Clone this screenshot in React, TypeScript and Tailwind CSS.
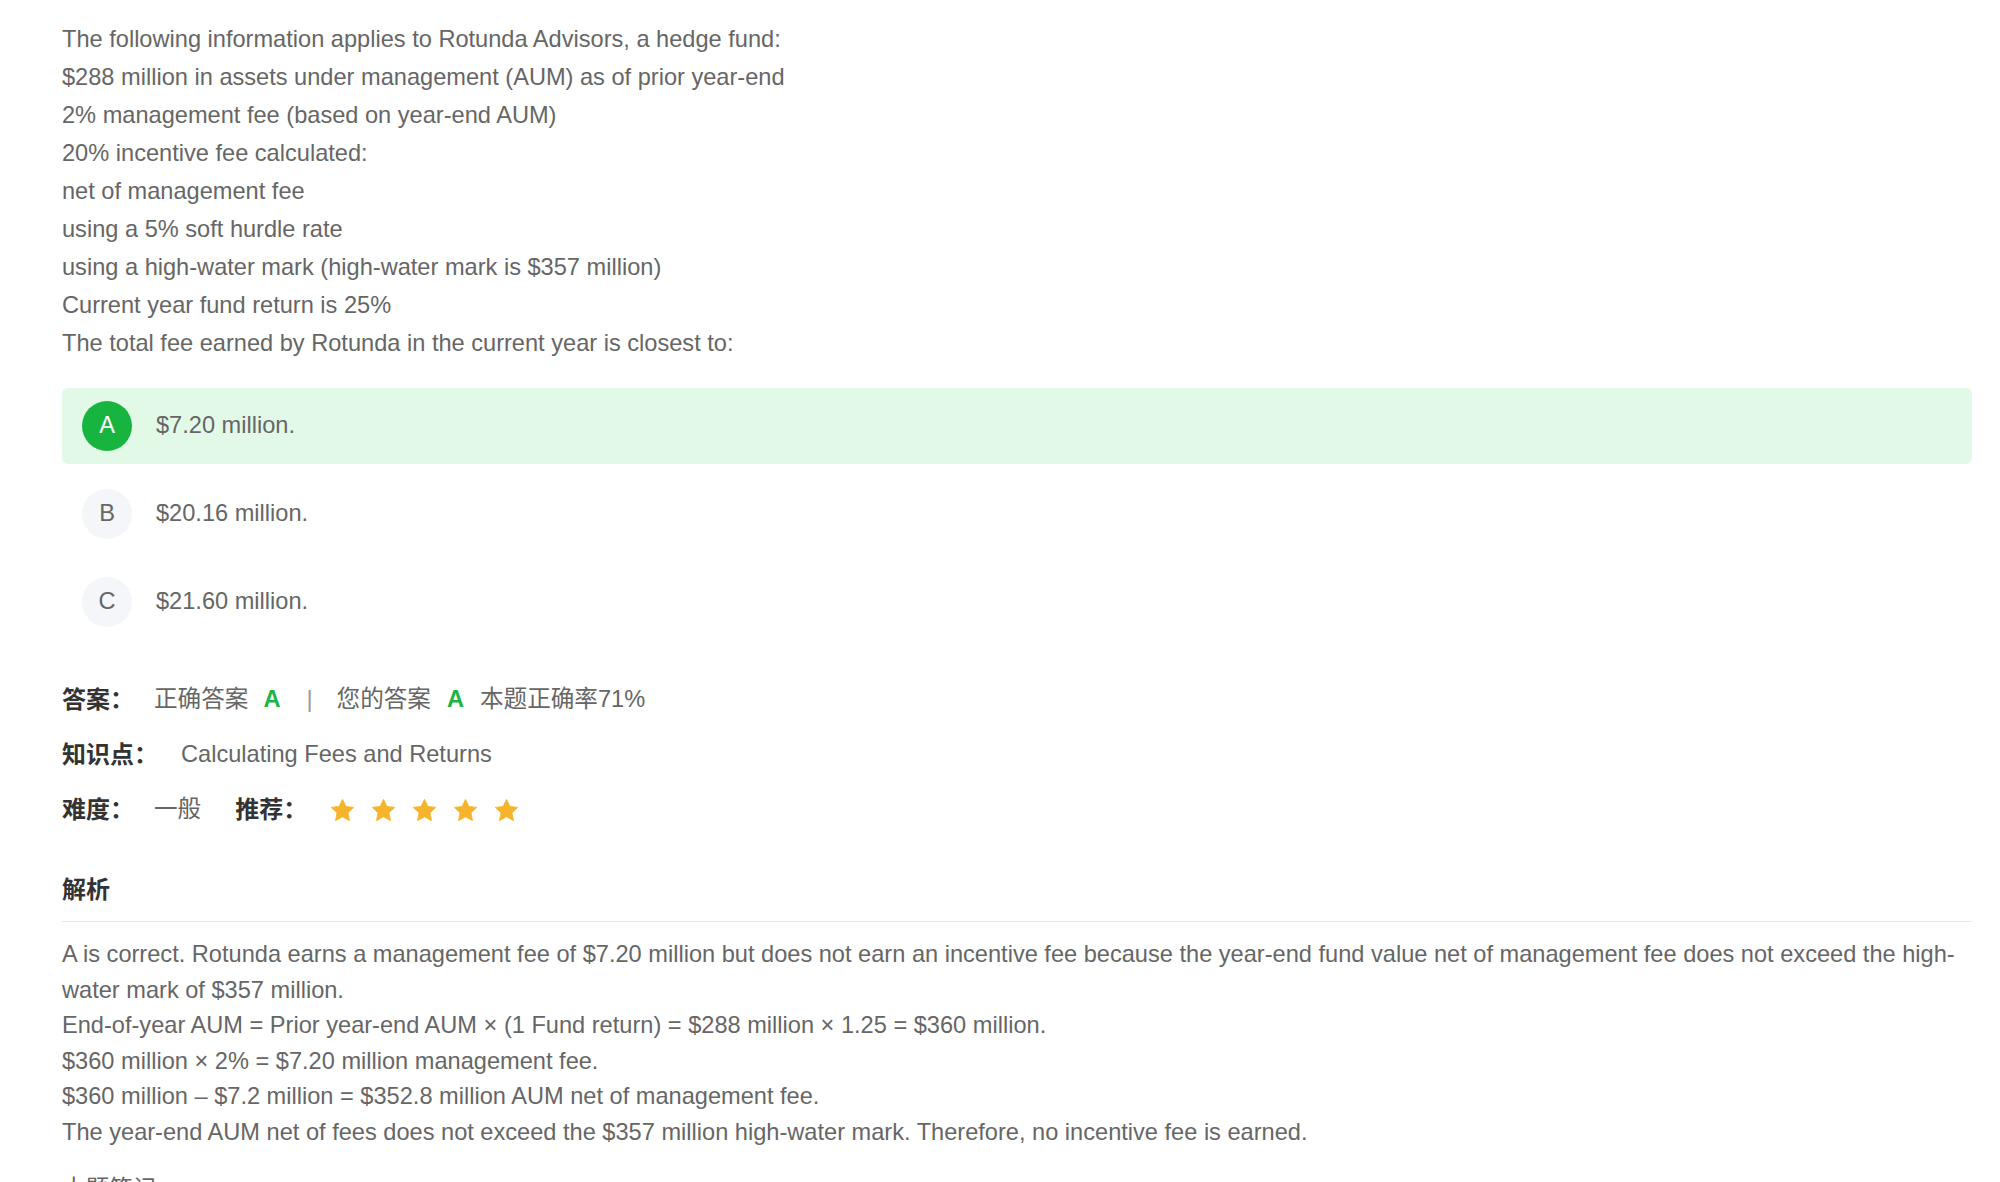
import React from "react";

const questionLines = [
    "The following information applies to Rotunda Advisors, a hedge fund:",
    "$288 million in assets under management (AUM) as of prior year-end",
    "2% management fee (based on year-end AUM)",
    "20% incentive fee calculated:",
    "net of management fee",
    "using a 5% soft hurdle rate",
    "using a high-water mark (high-water mark is $357 million)",
    "Current year fund return is 25%",
    "The total fee earned by Rotunda in the current year is closest to:",
];

const options = [
    { key: "A", text: "$7.20 million.", selected: true },
    { key: "B", text: "$20.16 million.", selected: false },
    { key: "C", text: "$21.60 million.", selected: false },
];

const explanation = [
    "A is correct. Rotunda earns a management fee of $7.20 million but does not earn an incentive fee because the year-end fund value net of management fee does not exceed the high-water mark of $357 million.",
    "End-of-year AUM = Prior year-end AUM × (1 Fund return) = $288 million × 1.25 = $360 million.",
    "$360 million × 2% = $7.20 million management fee.",
    "$360 million – $7.2 million = $352.8 million AUM net of management fee.",
    "The year-end AUM net of fees does not exceed the $357 million high-water mark. Therefore, no incentive fee is earned.",
];

const Star = () => (
    <svg width="23" height="22" viewBox="1 0.5 22 21">
        <polygon
            points="12,0.8 15.2,7.6 22.8,8.5 17.2,13.6 18.7,21.2 12,17.4 5.3,21.2 6.8,13.6 1.2,8.5 8.8,7.6"
            fill="#f6b42c"
            stroke="#f6b42c"
            strokeWidth="0.8"
            strokeLinejoin="round"
        />
    </svg>
);

const OptionRow = ({ letter, text, selected }: { letter: string, text: string, selected: boolean }) => (
    <div className={`flex h-[76px] items-center rounded-[6px] px-[20px] ${selected ? "bg-[#e3f9e8]" : ""}`}>
        <div
            className={`flex h-[50px] w-[50px] items-center justify-center rounded-full ${selected ? "bg-[#17b53f] text-white" : "bg-[#f4f6f9] text-[#666]"}`}
        >
            {letter}
        </div>
        <span className="ml-[24px]">{text}</span>
    </div>
);

export default function App() {
    return (
        <div className="min-h-screen bg-white pl-[62px] pr-[28px] pt-[20px] font-['Liberation_Sans','Noto_Sans_CJK_SC',sans-serif] text-[23.6px] text-[#666]">
            <div>
                {questionLines.map((line) => (
                    <div key={line} className="leading-[38px]">{line}</div>
                ))}
            </div>

            <div className="mt-[26px] flex flex-col gap-[12px]">
                {options.map((o) => (
                    <OptionRow key={o.key} letter={o.key} text={o.text} selected={o.selected} />
                ))}
            </div>

            <div className="mt-[32px]">
                <div className="flex h-[55px] items-center">
                    <span className="w-[92px] text-[24px] font-bold text-[#333]">答案：</span>
                    <span>正确答案</span>
                    <span className="ml-[15px] font-bold text-[#1cb445]">A</span>
                    <span className="ml-[26px] mr-[24px] text-[#999]">|</span>
                    <span>您的答案</span>
                    <span className="ml-[16px] font-bold text-[#1cb445]">A</span>
                    <span className="ml-[16px]">本题正确率71%</span>
                </div>
                <div className="flex h-[55px] items-center">
                    <span className="w-[119px] text-[24px] font-bold text-[#333]">知识点：</span>
                    <span>Calculating Fees and Returns</span>
                </div>
                <div className="flex h-[55px] items-center">
                    <span className="w-[92px] text-[24px] font-bold text-[#333]">难度：</span>
                    <span>一般</span>
                    <span className="ml-[34px] text-[24px] font-bold text-[#333]">推荐：</span>
                    <div className="ml-[24px] flex items-center gap-[18px]">
                        <Star />
                        <Star />
                        <Star />
                        <Star />
                        <Star />
                    </div>
                </div>
            </div>

            <div className="mt-[34px] border-b border-[#e8e8e8] pb-[12px] text-[24px] font-bold leading-[38px] text-[#333]">
                解析
            </div>

            <div className="mt-[15px] leading-[35.5px]">
                {explanation.map((line) => (
                    <div key={line}>{line}</div>
                ))}
            </div>

            <div className="mt-[20px] pb-[30px] leading-[38px]">本题笔记</div>
        </div>
    );
}
